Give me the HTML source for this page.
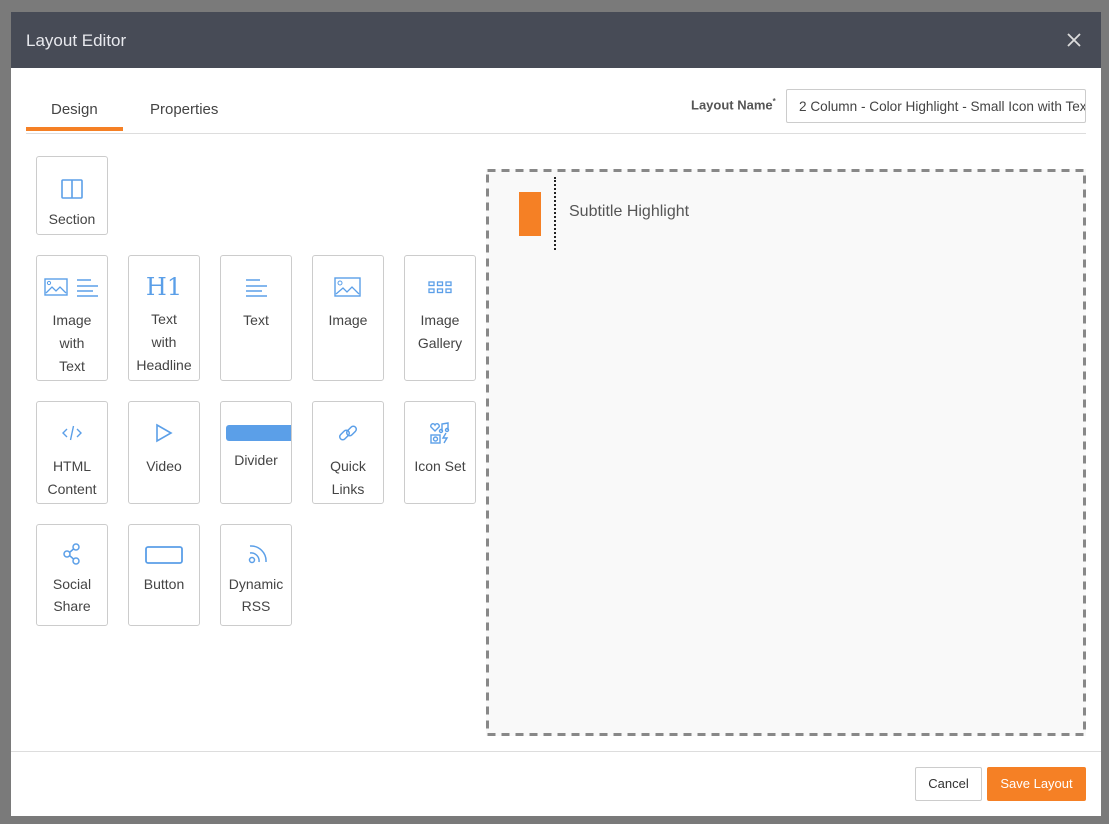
<!DOCTYPE html>
<html><head><style>
*{box-sizing:border-box;margin:0;padding:0}
body{width:1109px;height:824px;background:#7a7a7a;font-family:"Liberation Sans",sans-serif;position:relative;overflow:hidden;color:#444}
.modal{position:absolute;left:11px;top:12px;width:1090px;height:804px;background:#fff}
.hdr{height:56px;background:#474b56;color:#e8e9ee;font-size:17px;padding:19px 0 0 15px;position:relative}
.tab{position:absolute;font-size:15px;color:#444}
.tile{position:absolute;width:72px;border:1px solid #ccc;border-radius:3px;text-align:center;font-size:14px;line-height:23px;color:#444;background:#fff}
.tile svg{display:block;margin:0 auto}
</style></head><body>
<div class="modal">
<div class="hdr">Layout Editor<svg style="position:absolute;right:20px;top:21px" width="14" height="14" viewBox="0 0 14 14"><path d="M1 1l12 12M13 1L1 13" stroke="#ddd" stroke-width="1.8"/></svg></div>
</div>
<div class="tab" style="left:51px;top:101px">Design</div>
<div class="tab" style="left:150px;top:101px">Properties</div>
<div style="position:absolute;left:26px;top:127px;width:97px;height:4px;background:#f58025"></div>
<div style="position:absolute;left:26px;top:133px;width:1060px;height:1px;background:#ddd"></div>
<div style="position:absolute;left:691px;top:97px;font-size:13px;font-weight:bold;color:#555">Layout Name<sup style="font-size:8px">*</sup></div>
<div style="position:absolute;left:786px;top:89px;width:300px;height:34px;border:1px solid #ccc;border-radius:2px;font-size:13.6px;padding:9px 12px;white-space:nowrap;overflow:hidden;color:#444">2 Column - Color Highlight - Small Icon with Text</div>

<div class="tile" style="left:36px;top:156px;height:79px;padding-top:21px"><svg width="24" height="22" viewBox="0 0 24 22"><rect x="2" y="2" width="20" height="18" rx="1" fill="none" stroke="#5b9fe8" stroke-width="1.6"/><line x1="12" y1="2" x2="12" y2="20" stroke="#5b9fe8" stroke-width="1.6"/></svg><div style="margin-top:8px">Section</div></div>

<div class="tile" style="left:36px;top:255px;height:126px;padding-top:20px"><svg width="56" height="22" viewBox="0 0 56 22"><rect x="1" y="3" width="22" height="16" fill="none" stroke="#5b9fe8" stroke-width="1.4"/><circle cx="5" cy="7" r="1.6" fill="none" stroke="#5b9fe8"/><path d="M2 17l6-6 4 4 4-4 6 6" fill="none" stroke="#5b9fe8" stroke-width="1.3"/><path d="M33 4h14M33 10h21M33 15h16M33 20h21" stroke="#5b9fe8" stroke-width="1.6"/></svg><div style="margin-top:11px">Image<br>with<br>Text</div></div>
<div class="tile" style="left:128px;top:255px;height:126px;padding-top:17px"><div style="font-family:'DejaVu Serif',serif;color:#5b9fe8;font-size:24px;line-height:28px">H1</div><div style="margin-top:7px">Text<br>with<br>Headline</div></div>
<div class="tile" style="left:220px;top:255px;height:126px;padding-top:20px"><svg width="24" height="22" viewBox="0 0 24 22"><path d="M2 4h14M2 10h21M2 15h16M2 20h21" stroke="#5b9fe8" stroke-width="1.6"/></svg><div style="margin-top:11px">Text</div></div>
<div class="tile" style="left:312px;top:255px;height:126px;padding-top:20px"><svg width="28" height="22" viewBox="0 0 28 22"><rect x="1" y="2" width="25" height="18" fill="none" stroke="#5b9fe8" stroke-width="1.4"/><circle cx="6" cy="7" r="2" fill="none" stroke="#5b9fe8"/><path d="M2 18l7-6 4 4 5-5 7 7" fill="none" stroke="#5b9fe8" stroke-width="1.3"/></svg><div style="margin-top:11px">Image</div></div>
<div class="tile" style="left:404px;top:255px;height:126px;padding-top:20px"><svg width="32" height="22" viewBox="0 0 32 22"><g fill="none" stroke="#5b9fe8" stroke-width="1.3"><rect x="5" y="6" width="5" height="3.5"/><rect x="13.5" y="6" width="5" height="3.5"/><rect x="22" y="6" width="5" height="3.5"/><rect x="5" y="13" width="5" height="3.5"/><rect x="13.5" y="13" width="5" height="3.5"/><rect x="22" y="13" width="5" height="3.5"/></g></svg><div style="margin-top:11px">Image<br>Gallery</div></div>

<div class="tile" style="left:36px;top:401px;height:103px;padding-top:20px"><svg width="24" height="22" viewBox="0 0 24 22"><path d="M7 7l-4 4 4 4M17 7l4 4-4 4M13.5 4l-3 14" fill="none" stroke="#5b9fe8" stroke-width="1.4"/></svg><div style="margin-top:11px">HTML<br>Content</div></div>
<div class="tile" style="left:128px;top:401px;height:103px;padding-top:20px"><svg width="24" height="22" viewBox="0 0 24 22"><path d="M5 3l14 8-14 8z" fill="none" stroke="#5b9fe8" stroke-width="1.6"/></svg><div style="margin-top:11px">Video</div></div>
<div class="tile" style="left:220px;top:401px;height:103px;padding-top:23px;overflow:hidden"><div style="margin-left:5px;width:70px;height:16px;background:#5b9fe8;border-radius:3px"></div><div style="margin-top:8px">Divider</div></div>
<div class="tile" style="left:312px;top:401px;height:103px;padding-top:20px"><svg width="24" height="22" viewBox="0 0 24 22"><g fill="none" stroke="#5b9fe8" stroke-width="1.5"><rect x="3" y="10" width="11" height="6" rx="3" transform="rotate(-45 8.5 13)"/><rect x="10" y="6" width="11" height="6" rx="3" transform="rotate(-45 15.5 9)"/></g></svg><div style="margin-top:11px">Quick<br>Links</div></div>
<div class="tile" style="left:404px;top:401px;height:103px;padding-top:20px"><svg width="24" height="22" viewBox="0 0 24 22"><g fill="none" stroke="#5b9fe8" stroke-width="1.4"><path d="M7 9L3 5a2 2 0 0 1 4-2a2 2 0 0 1 4 2z"/><path d="M14 9V2l6-1v7"/><circle cx="13" cy="9" r="1.5"/><circle cx="19" cy="8" r="1.5"/><rect x="3" y="13" width="9" height="8"/><circle cx="7.5" cy="17" r="2"/><path d="M18 11l-3 5h4l-3 5"/></g></svg><div style="margin-top:11px">Icon Set</div></div>

<div class="tile" style="left:36px;top:524px;height:102px;padding-top:18px"><svg width="24" height="22" viewBox="0 0 24 22"><g fill="none" stroke="#5b9fe8" stroke-width="1.5"><circle cx="16" cy="4" r="3"/><circle cx="7" cy="11" r="3"/><circle cx="16" cy="18" r="3"/><path d="M9.5 9.5l4-3.5M9.5 12.5l4 3.5"/></g></svg><div style="margin-top:8px;line-height:22px">Social<br>Share</div></div>
<div class="tile" style="left:128px;top:524px;height:102px;padding-top:20px"><svg width="40" height="20" viewBox="0 0 40 20"><rect x="2" y="2" width="36" height="16" rx="2" fill="none" stroke="#5b9fe8" stroke-width="1.8"/></svg><div style="margin-top:8px">Button</div></div>
<div class="tile" style="left:220px;top:524px;height:102px;padding-top:18px"><svg width="24" height="22" viewBox="0 0 24 22"><g fill="none" stroke="#5b9fe8" stroke-width="1.5"><circle cx="8" cy="17" r="2.5"/><path d="M6 10a8 8 0 0 1 9 9M6 3a15 15 0 0 1 16 16"/></g></svg><div style="margin-top:8px;line-height:22px">Dynamic<br>RSS</div></div>

<div style="position:absolute;left:486px;top:169px;width:600px;height:567px;background:#f9f9f9"></div>
<svg style="position:absolute;left:486px;top:169px" width="600" height="567"><rect x="1.5" y="1.5" width="597" height="564" fill="none" stroke="#888" stroke-width="3" stroke-dasharray="8 6"/></svg>
<div style="position:absolute;left:519px;top:192px;width:22px;height:44px;background:#f58025"></div>
<div style="position:absolute;left:554px;top:177px;height:73px;border-left:2px dotted #222"></div>
<div style="position:absolute;left:569px;top:203px;font-size:16px;color:#555">Subtitle Highlight</div>

<div style="position:absolute;left:11px;top:751px;width:1090px;height:1px;background:#ddd"></div>
<div style="position:absolute;left:915px;top:767px;width:67px;height:34px;border:1px solid #ccc;border-radius:2px;font-size:13px;text-align:center;line-height:32px;color:#333">Cancel</div>
<div style="position:absolute;left:987px;top:767px;width:99px;height:34px;background:#f58025;border-radius:2px;font-size:13px;text-align:center;line-height:34px;color:#fff">Save Layout</div>
</body></html>
